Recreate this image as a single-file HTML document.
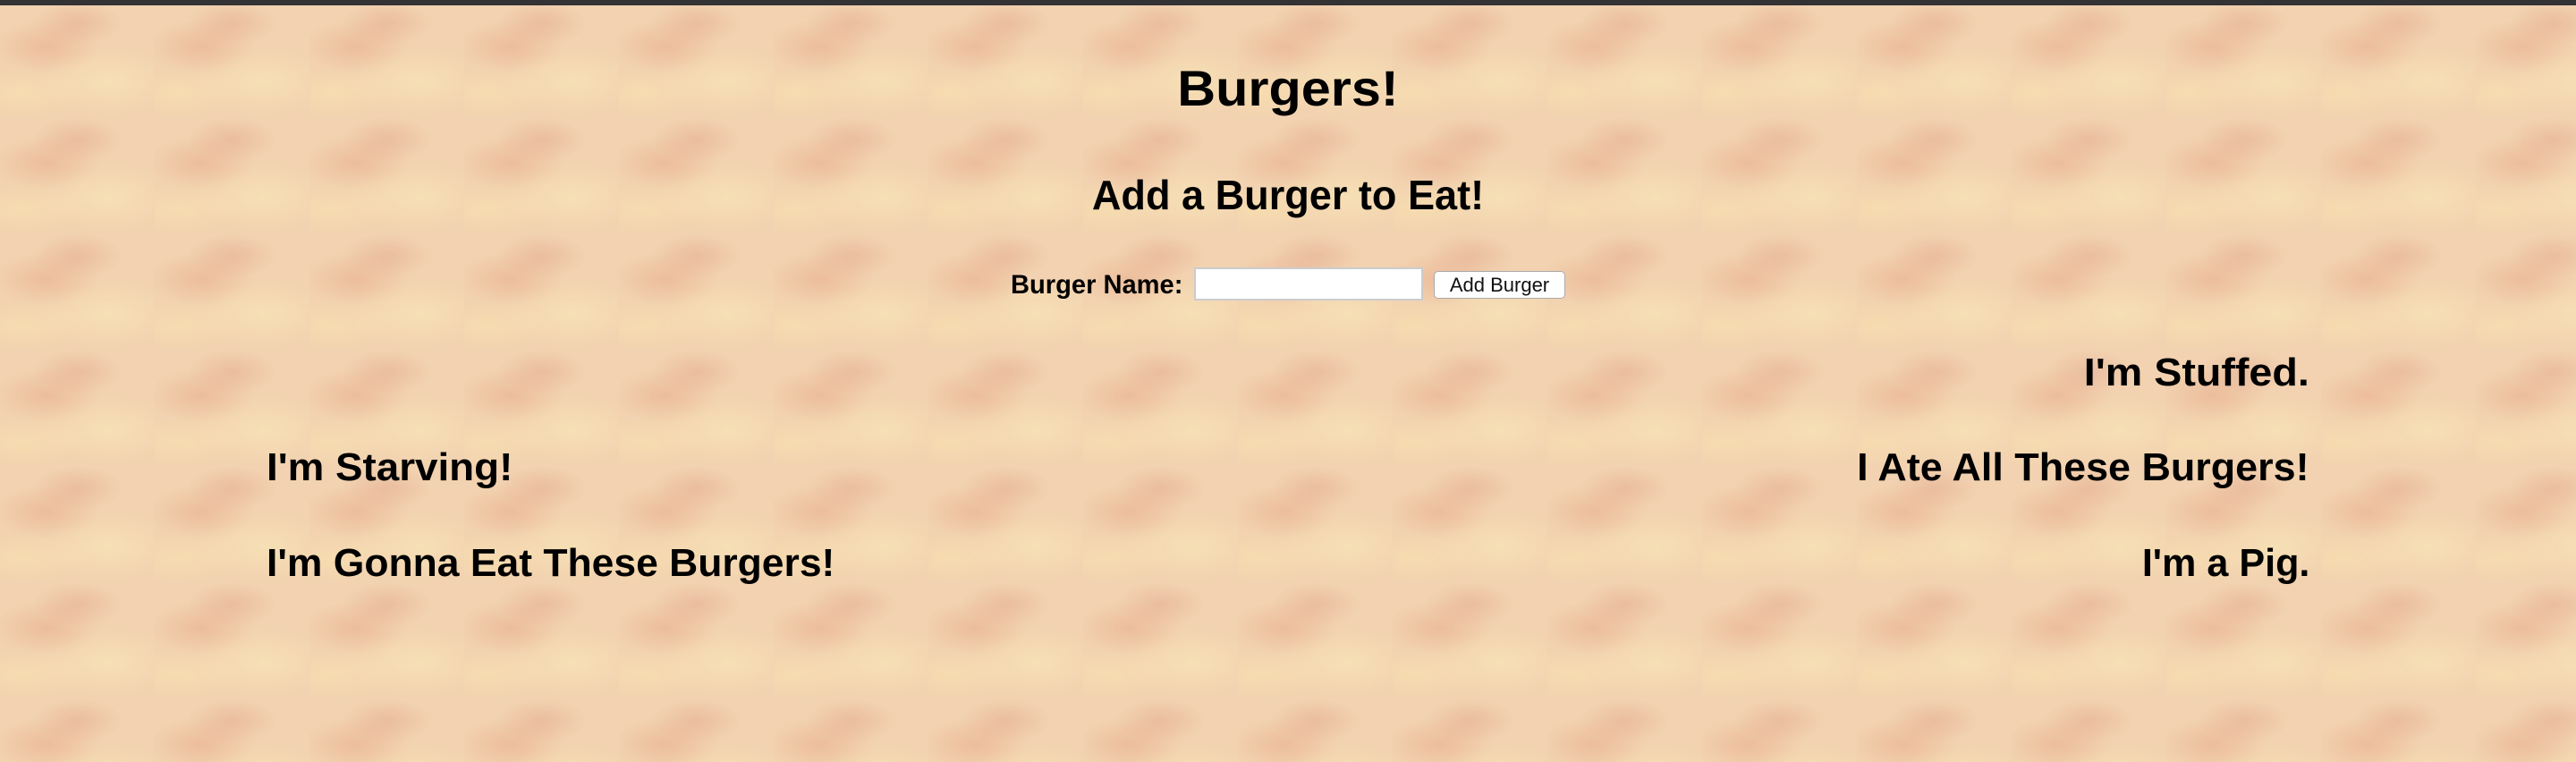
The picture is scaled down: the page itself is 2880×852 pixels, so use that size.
<!DOCTYPE html>
<html><head><meta charset="utf-8"><style>
html,body{margin:0;padding:0;width:2880px;height:852px;overflow:hidden}
body{position:relative;background-color:#f2d2b0;
background-image:
radial-gradient(ellipse 60px 30px at 30% 40%,rgba(225,150,120,.35),transparent),
radial-gradient(ellipse 80px 40px at 70% 70%,rgba(250,235,185,.55),transparent),
radial-gradient(ellipse 50px 25px at 50% 20%,rgba(215,140,120,.3),transparent),
radial-gradient(ellipse 70px 30px at 15% 80%,rgba(250,230,175,.5),transparent);
background-size:173px 130px;
font-family:"Liberation Sans",sans-serif;}
.bar{position:absolute;left:0;top:0;width:2880px;height:6px;background:#333}
.t{position:absolute;white-space:nowrap;font-weight:bold;color:#000;line-height:1}
.c{left:0;width:2880px;text-align:center}
.l{transform-origin:left top}
.r{transform-origin:right top;text-align:right}
</style></head><body>
<div class="bar"></div>
<div class="t c" style="top:71px;font-size:56px;transform:scaleX(1.06)">Burgers!</div>
<div class="t c" style="top:195px;font-size:46px;transform:scaleX(.98)">Add a Burger to Eat!</div>
<div class="t l" style="left:1130px;top:304px;font-size:30px;transform:scaleX(.97)">Burger Name:</div>
<div style="position:absolute;left:1335px;top:299px;width:252px;height:33px;background:#fff;border:2px solid #ccc"></div>
<div style="position:absolute;left:1603px;top:303px;width:145px;height:29px;background:#fff;border:1px solid #aaa;border-radius:5px;font-size:22px;line-height:29px;text-align:center;color:#111">Add Burger</div>
<div class="t l" style="left:298px;top:501px;font-size:44px;transform:scaleX(1.04)">I'm Starving!</div>
<div class="t l" style="left:298px;top:608px;font-size:44px;transform:scaleX(1.01)">I'm Gonna Eat These Burgers!</div>
<div class="t r" style="right:298px;top:395px;font-size:44px;transform:scaleX(1.06)">I'm Stuffed.</div>
<div class="t r" style="right:298px;top:501px;font-size:44px;transform:scaleX(1.02)">I Ate All These Burgers!</div>
<div class="t r" style="right:298px;top:608px;font-size:44px;transform:scaleX(.98)">I'm a Pig.</div>
</body></html>
